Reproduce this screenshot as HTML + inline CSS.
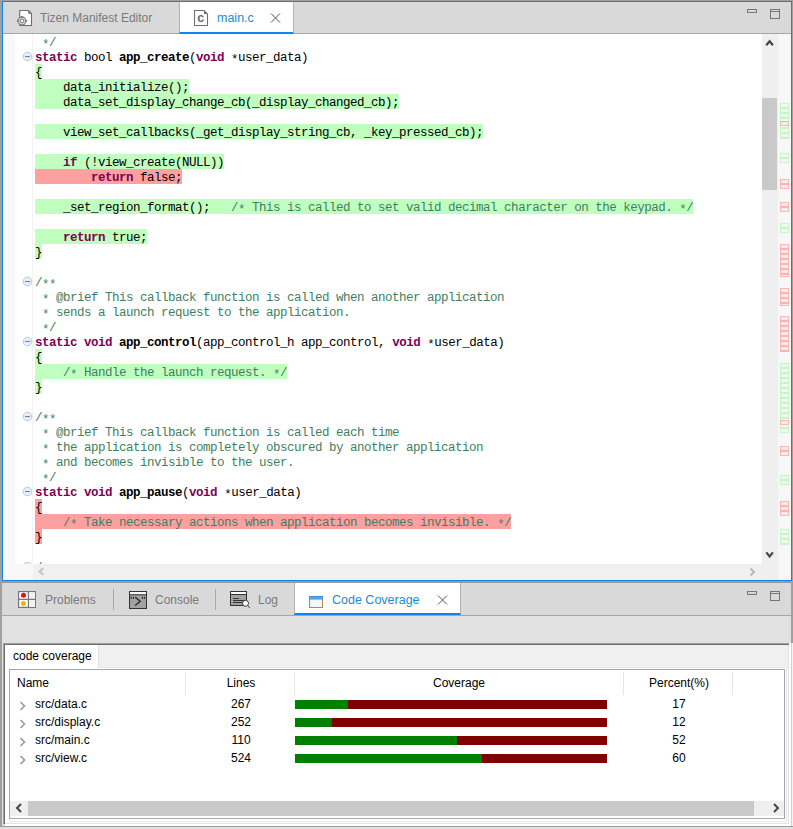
<!DOCTYPE html>
<html><head><meta charset="utf-8">
<style>
*{margin:0;padding:0;box-sizing:border-box}
html,body{width:793px;height:829px;overflow:hidden;background:#a0a0a0;font-family:"Liberation Sans",sans-serif;font-size:12px}
.a{position:absolute}
#edb{left:2px;top:1px;width:790px;height:580px;border:1px solid #0d86f0;background:#fff}
#tabbar{left:3px;top:2px;width:788px;height:32px;background:#d9d9d9;border-bottom:1px solid #a6a6a6}
#gut1{left:3px;top:34px;width:12px;height:530px;background:#f8f8f8}
#gutline{left:32px;top:34px;width:1px;height:530px;background:#f3f3f3}
#code{left:35px;top:34px;width:727px;height:530px;overflow:hidden;font-family:"Liberation Mono",monospace;font-size:12.5px;letter-spacing:-0.5px;line-height:15px;color:#000}
#hsb{left:3px;top:564px;width:30px;height:16px;background:#f8f8f8}
#hsb2{left:33px;top:564px;width:745px;height:16px;background:#f0f0f0}
#vsb{left:762px;top:34px;width:16px;height:546px;background:#efefef}
#vthumb{left:762px;top:98px;width:15px;height:92px;background:#c9c9c9}
#ovr{left:778px;top:34px;width:13px;height:546px;background:#f7f7f7}
.l{height:15px;position:relative;white-space:pre}
.l>span{display:inline-block;height:15px;vertical-align:top;padding-top:2px}
.g{background:#c0ffc0}
.r{background:#ffa0a0}
.k{color:#7f0055;font-weight:bold}
.b{font-weight:bold}
.c{color:#3f7f5f}
.s{font-style:normal;position:relative;top:2px}
</style></head><body>
<div id="edb" class="a"></div>
<div id="tabbar" class="a"></div>
<div id="gut1" class="a"></div>
<div id="gutline" class="a"></div>
<div id="code" class="a">
<div class="l"><span class="c"> <i class="s">*</i>/</span></div>
<div class="l"><span class="k">static</span><span> bool </span><span class="b">app_create</span><span>(</span><span class="k">void</span><span> <i class="s">*</i>user_data)</span></div>
<div class="l"><span class="g">{</span></div>
<div class="l"><span class="g">    data_initialize();</span></div>
<div class="l"><span class="g">    data_set_display_change_cb(_display_changed_cb);</span></div>
<div class="l"></div>
<div class="l"><span class="g">    view_set_callbacks(_get_display_string_cb, _key_pressed_cb);</span></div>
<div class="l"></div>
<div class="l"><span class="g">    <span class="k">if</span> (!view_create(NULL))</span></div>
<div class="l"><span class="r">        <span class="k">return</span> false;</span></div>
<div class="l"></div>
<div class="l"><span class="g">    _set_region_format();   <span class="c">/<i class="s">*</i> This is called to set valid decimal character on the keypad. <i class="s">*</i>/</span></span></div>
<div class="l"></div>
<div class="l"><span class="g">    <span class="k">return</span> true;</span></div>
<div class="l"><span class="g">}</span></div>
<div class="l"></div>
<div class="l"><span class="c">/<i class="s">*</i><i class="s">*</i></span></div>
<div class="l"><span class="c"> <i class="s">*</i> @brief This callback function is called when another application</span></div>
<div class="l"><span class="c"> <i class="s">*</i> sends a launch request to the application.</span></div>
<div class="l"><span class="c"> <i class="s">*</i>/</span></div>
<div class="l"><span class="k">static</span><span> </span><span class="k">void</span><span> </span><span class="b">app_control</span><span>(app_control_h app_control, </span><span class="k">void</span><span> <i class="s">*</i>user_data)</span></div>
<div class="l"><span class="g">{</span></div>
<div class="l"><span class="g">    <span class="c">/<i class="s">*</i> Handle the launch request. <i class="s">*</i>/</span></span></div>
<div class="l"><span class="g">}</span></div>
<div class="l"></div>
<div class="l"><span class="c">/<i class="s">*</i><i class="s">*</i></span></div>
<div class="l"><span class="c"> <i class="s">*</i> @brief This callback function is called each time</span></div>
<div class="l"><span class="c"> <i class="s">*</i> the application is completely obscured by another application</span></div>
<div class="l"><span class="c"> <i class="s">*</i> and becomes invisible to the user.</span></div>
<div class="l"><span class="c"> <i class="s">*</i>/</span></div>
<div class="l"><span class="k">static</span><span> </span><span class="k">void</span><span> </span><span class="b">app_pause</span><span>(</span><span class="k">void</span><span> <i class="s">*</i>user_data)</span></div>
<div class="l"><span class="r">{</span></div>
<div class="l"><span class="r">    <span class="c">/<i class="s">*</i> Take necessary actions when application becomes invisible. <i class="s">*</i>/</span></span></div>
<div class="l"><span class="r">}</span></div>
<div class="l"></div>
<div class="l"><span class="c">/</span></div>
  </div>
<div id="hsb" class="a"></div>
<div id="hsb2" class="a"></div>
<div id="vsb" class="a"></div>
<div id="vthumb" class="a"></div>
<div id="ovr" class="a"></div>
<div class="a" style="left:40px;top:11px;font-size:12px;color:#7a7a7a;line-height:15px">Tizen Manifest Editor</div>
<svg class="a" style="left:16px;top:9px" width="18" height="19" viewBox="0 0 18 19">
<path d="M3.7 16.5 V1.5 H12.5 L15.5 4.5 V16.5 Z" fill="#fff" stroke="#6e6e6e" stroke-width="1.1"/>
<path d="M12.3 1.5 V4.7 H15.5 Z" fill="#6e6e6e"/>
<circle cx="6" cy="12" r="3.9" fill="#dedede" stroke="#7c7c7c" stroke-width="1.1"/>
<rect x="5" y="7" width="2" height="1.4" fill="#7c7c7c"/>
<rect x="0.9" y="11" width="1.4" height="2" fill="#7c7c7c"/>
<rect x="9.7" y="11" width="1.4" height="2" fill="#7c7c7c"/>
<circle cx="6" cy="12" r="1.9" fill="none" stroke="#7c7c7c" stroke-width="1"/>
<circle cx="6" cy="12" r="1" fill="#fff"/>
<path d="M3.7 16.5 H15.5" stroke="#6e6e6e" stroke-width="1.1"/>
</svg>
<div class="a" style="left:179px;top:2px;width:115px;height:32px;background:#fff;border-left:1px solid #b4b4b4;border-right:1px solid #b4b4b4;border-bottom:2px solid #0d86f0"></div>
<svg class="a" style="left:193px;top:9px" width="16" height="18" viewBox="0 0 16 18">
<path d="M1.5 16.5 V1.5 H11 L14.5 5 V16.5 Z" fill="#fff" stroke="#707070" stroke-width="1.1"/>
<path d="M11 1.5 V5 H14.5 Z" fill="#707070"/>
<text x="7.8" y="12.6" font-family="Liberation Sans" font-weight="bold" font-size="12.5" fill="#6a6a6a" text-anchor="middle">c</text>
</svg>
<div class="a" style="left:217px;top:11px;font-size:12.5px;color:#1a8cd8;line-height:15px">main.c</div>
<svg class="a" style="left:270px;top:13px" width="11" height="10" viewBox="0 0 11 10">
<path d="M1 0.5 L10 9.5 M10 0.5 L1 9.5" stroke="#555" stroke-width="1"/>
</svg>
<div class="a" style="left:747px;top:9px;width:10px;height:4px;border:1px solid #777"></div>
<div class="a" style="left:770px;top:9px;width:10px;height:10px;border:1px solid #777"></div><div class="a" style="left:771px;top:11px;width:8px;height:1px;background:#777"></div>
<svg class="a" style="left:22px;top:51px" width="11" height="11" viewBox="0 0 11 11"><circle cx="5.5" cy="5.5" r="4.3" fill="#e8f0fb" stroke="#bcc7d9" stroke-width="1"/><path d="M3 5.5 H8" stroke="#7482a2" stroke-width="1.1"/></svg>
<svg class="a" style="left:22px;top:276px" width="11" height="11" viewBox="0 0 11 11"><circle cx="5.5" cy="5.5" r="4.3" fill="#e8f0fb" stroke="#bcc7d9" stroke-width="1"/><path d="M3 5.5 H8" stroke="#7482a2" stroke-width="1.1"/></svg>
<svg class="a" style="left:22px;top:336px" width="11" height="11" viewBox="0 0 11 11"><circle cx="5.5" cy="5.5" r="4.3" fill="#e8f0fb" stroke="#bcc7d9" stroke-width="1"/><path d="M3 5.5 H8" stroke="#7482a2" stroke-width="1.1"/></svg>
<svg class="a" style="left:22px;top:411px" width="11" height="11" viewBox="0 0 11 11"><circle cx="5.5" cy="5.5" r="4.3" fill="#e8f0fb" stroke="#bcc7d9" stroke-width="1"/><path d="M3 5.5 H8" stroke="#7482a2" stroke-width="1.1"/></svg>
<svg class="a" style="left:22px;top:486px" width="11" height="11" viewBox="0 0 11 11"><circle cx="5.5" cy="5.5" r="4.3" fill="#e8f0fb" stroke="#bcc7d9" stroke-width="1"/><path d="M3 5.5 H8" stroke="#7482a2" stroke-width="1.1"/></svg>
<div class="a" style="left:22px;top:562px;width:11px;height:2px;overflow:hidden"><svg style="position:absolute;left:0;top:-1px" width="11" height="11" viewBox="0 0 11 11"><circle cx="5.5" cy="5.5" r="4.3" fill="#e8f0fb" stroke="#bcc7d9" stroke-width="1"/><path d="M3 5.5 H8" stroke="#7482a2" stroke-width="1.1"/></svg></div>
<svg class="a" style="left:765px;top:39px" width="10" height="8" viewBox="0 0 10 8"><path d="M1.3 6.3 L4.6 2.3 L7.9 6.3" fill="none" stroke="#454545" stroke-width="2.2"/></svg>
<svg class="a" style="left:765px;top:551px" width="10" height="8" viewBox="0 0 10 8"><path d="M1.3 1.4 L4.6 5.4 L7.9 1.4" fill="none" stroke="#454545" stroke-width="2.2"/></svg>
<svg class="a" style="left:748px;top:567px" width="10" height="10" viewBox="0 0 10 10"><path d="M2.5 1.5 L6 5 L2.5 8.5" fill="none" stroke="#b8b8b8" stroke-width="2"/></svg>
<div class="a" style="left:780px;top:103px;width:9px;height:36px;border:1px solid #c6f5c6;background:repeating-linear-gradient(to bottom,#f0fdf0 0px,#f0fdf0 3px,#c6f5c6 3px,#c6f5c6 5px)"></div>
<div class="a" style="left:780px;top:121px;width:9px;height:5px;border:1px solid #ffb4b4;background:repeating-linear-gradient(to bottom,#ffeaea 0px,#ffeaea 3px,#ffb4b4 3px,#ffb4b4 5px)"></div>
<div class="a" style="left:780px;top:153px;width:9px;height:10px;border:1px solid #c6f5c6;background:repeating-linear-gradient(to bottom,#f0fdf0 0px,#f0fdf0 3px,#c6f5c6 3px,#c6f5c6 5px)"></div>
<div class="a" style="left:780px;top:179px;width:9px;height:10px;border:1px solid #ffb4b4;background:repeating-linear-gradient(to bottom,#ffeaea 0px,#ffeaea 3px,#ffb4b4 3px,#ffb4b4 5px)"></div>
<div class="a" style="left:780px;top:202px;width:9px;height:10px;border:1px solid #ffb4b4;background:repeating-linear-gradient(to bottom,#ffeaea 0px,#ffeaea 3px,#ffb4b4 3px,#ffb4b4 5px)"></div>
<div class="a" style="left:780px;top:223px;width:9px;height:10px;border:1px solid #c6f5c6;background:repeating-linear-gradient(to bottom,#f0fdf0 0px,#f0fdf0 3px,#c6f5c6 3px,#c6f5c6 5px)"></div>
<div class="a" style="left:780px;top:244px;width:9px;height:33px;border:1px solid #ffb4b4;background:repeating-linear-gradient(to bottom,#ffeaea 0px,#ffeaea 3px,#ffb4b4 3px,#ffb4b4 5px)"></div>
<div class="a" style="left:780px;top:288px;width:9px;height:18px;border:1px solid #ffb4b4;background:repeating-linear-gradient(to bottom,#ffeaea 0px,#ffeaea 3px,#ffb4b4 3px,#ffb4b4 5px)"></div>
<div class="a" style="left:780px;top:316px;width:9px;height:36px;border:1px solid #ffb4b4;background:repeating-linear-gradient(to bottom,#ffeaea 0px,#ffeaea 3px,#ffb4b4 3px,#ffb4b4 5px)"></div>
<div class="a" style="left:780px;top:363px;width:9px;height:70px;border:1px solid #c6f5c6;background:repeating-linear-gradient(to bottom,#f0fdf0 0px,#f0fdf0 3px,#c6f5c6 3px,#c6f5c6 5px)"></div>
<div class="a" style="left:780px;top:420px;width:9px;height:5px;border:1px solid #ffb4b4;background:repeating-linear-gradient(to bottom,#ffeaea 0px,#ffeaea 3px,#ffb4b4 3px,#ffb4b4 5px)"></div>
<div class="a" style="left:780px;top:446px;width:9px;height:10px;border:1px solid #ffb4b4;background:repeating-linear-gradient(to bottom,#ffeaea 0px,#ffeaea 3px,#ffb4b4 3px,#ffb4b4 5px)"></div>
<div class="a" style="left:780px;top:475px;width:9px;height:10px;border:1px solid #c6f5c6;background:repeating-linear-gradient(to bottom,#f0fdf0 0px,#f0fdf0 3px,#c6f5c6 3px,#c6f5c6 5px)"></div>
<div class="a" style="left:780px;top:501px;width:9px;height:15px;border:1px solid #ffb4b4;background:repeating-linear-gradient(to bottom,#ffeaea 0px,#ffeaea 3px,#ffb4b4 3px,#ffb4b4 5px)"></div>
<div class="a" style="left:780px;top:529px;width:9px;height:16px;border:1px solid #c6f5c6;background:repeating-linear-gradient(to bottom,#f0fdf0 0px,#f0fdf0 3px,#c6f5c6 3px,#c6f5c6 5px)"></div>
<svg class="a" style="left:37px;top:567px" width="10" height="10" viewBox="0 0 10 10"><path d="M6.3 1.3 L2.6 4.5 L6.3 7.7" fill="none" stroke="#c2c2c2" stroke-width="2"/></svg>
<!--EDITOR_EXTRA-->
<div class="a" style="left:2px;top:581px;width:789px;height:2px;background:#9a9a9a"></div>
<div class="a" style="left:2px;top:583px;width:789px;height:244px;background:#d9d9d9"></div>
<div class="a" style="left:2px;top:615px;width:789px;height:1px;background:#a6a6a6"></div>
<div class="a" style="left:2px;top:616px;width:789px;height:27px;background:#e1e1e1"></div>
<!-- sunken frame -->
<div class="a" style="left:2px;top:643px;width:1px;height:183px;background:#e0e0e0"></div>
<div class="a" style="left:3px;top:643px;width:787px;height:1px;background:#a0a0a0"></div>
<div class="a" style="left:3px;top:644px;width:786px;height:1px;background:#6e6e6e"></div>
<div class="a" style="left:3px;top:643px;width:1px;height:181px;background:#a0a0a0"></div>
<div class="a" style="left:4px;top:644px;width:1px;height:180px;background:#6e6e6e"></div>
<div class="a" style="left:5px;top:645px;width:784px;height:181px;background:#fff"></div>
<div class="a" style="left:9px;top:821px;width:778px;height:1px;background:#e8e8e8"></div>
<div class="a" style="left:786px;top:667px;width:1px;height:155px;background:#e8e8e8"></div>
<div class="a" style="left:5px;top:823px;width:784px;height:1px;background:#e2e2e2"></div>
<div class="a" style="left:788px;top:645px;width:1px;height:179px;background:#e2e2e2"></div>
<div class="a" style="left:789px;top:643px;width:2px;height:183px;background:#fff"></div>
<div class="a" style="left:791px;top:643px;width:1px;height:183px;background:#d0d0d0"></div>
<div class="a" style="left:792px;top:643px;width:1px;height:183px;background:#f4f4f4"></div>
<div class="a" style="left:0px;top:826px;width:793px;height:1px;background:#9c9c9c"></div>
<div class="a" style="left:0px;top:827px;width:793px;height:2px;background:#e1e1e1"></div>
<!-- sub tab strip -->
<div class="a" style="left:98px;top:645px;width:690px;height:23px;background:#f0f0f0;border-left:1px solid #e0e0e0;border-bottom:1px solid #e6e6e6"></div>
<div class="a" style="left:13px;top:647px;font-size:12px;line-height:18px;color:#000">code coverage</div>
<!-- table -->
<div class="a" style="left:9px;top:669px;width:776px;height:150px;border:1px solid #a5a5ad;background:#fff"></div>
<div class="a" style="left:185px;top:672px;width:1px;height:23px;background:#e6e6e6"></div>
<div class="a" style="left:294px;top:672px;width:1px;height:23px;background:#e6e6e6"></div>
<div class="a" style="left:623px;top:672px;width:1px;height:23px;background:#e6e6e6"></div>
<div class="a" style="left:732px;top:672px;width:1px;height:23px;background:#e6e6e6"></div>
<div class="a" style="left:17px;top:674px;font-size:12px;line-height:18px">Name</div>
<div class="a" style="left:187px;top:674px;width:108px;text-align:center;font-size:12px;line-height:18px">Lines</div>
<div class="a" style="left:295px;top:674px;width:328px;text-align:center;font-size:12px;line-height:18px">Coverage</div>
<div class="a" style="left:625px;top:674px;width:108px;text-align:center;font-size:12px;line-height:18px">Percent(%)</div>
<svg class="a" style="left:19px;top:701px" width="8" height="10" viewBox="0 0 8 10"><path d="M1.5 1 L5.5 5 L1.5 9" fill="none" stroke="#9a9a9a" stroke-width="1.6"/></svg>
<div class="a" style="left:35px;top:695px;font-size:12px;line-height:18px">src/data.c</div>
<div class="a" style="left:187px;top:695px;width:108px;text-align:center;font-size:12px;line-height:18px">267</div>
<div class="a" style="left:295px;top:700px;width:312px;height:9px;background:#800000"></div>
<div class="a" style="left:295px;top:700px;width:53px;height:9px;background:#008000"></div>
<div class="a" style="left:625px;top:695px;width:108px;text-align:center;font-size:12px;line-height:18px">17</div>
<svg class="a" style="left:19px;top:719px" width="8" height="10" viewBox="0 0 8 10"><path d="M1.5 1 L5.5 5 L1.5 9" fill="none" stroke="#9a9a9a" stroke-width="1.6"/></svg>
<div class="a" style="left:35px;top:713px;font-size:12px;line-height:18px">src/display.c</div>
<div class="a" style="left:187px;top:713px;width:108px;text-align:center;font-size:12px;line-height:18px">252</div>
<div class="a" style="left:295px;top:718px;width:312px;height:9px;background:#800000"></div>
<div class="a" style="left:295px;top:718px;width:37px;height:9px;background:#008000"></div>
<div class="a" style="left:625px;top:713px;width:108px;text-align:center;font-size:12px;line-height:18px">12</div>
<svg class="a" style="left:19px;top:737px" width="8" height="10" viewBox="0 0 8 10"><path d="M1.5 1 L5.5 5 L1.5 9" fill="none" stroke="#9a9a9a" stroke-width="1.6"/></svg>
<div class="a" style="left:35px;top:731px;font-size:12px;line-height:18px">src/main.c</div>
<div class="a" style="left:187px;top:731px;width:108px;text-align:center;font-size:12px;line-height:18px">110</div>
<div class="a" style="left:295px;top:736px;width:312px;height:9px;background:#800000"></div>
<div class="a" style="left:295px;top:736px;width:162px;height:9px;background:#008000"></div>
<div class="a" style="left:625px;top:731px;width:108px;text-align:center;font-size:12px;line-height:18px">52</div>
<svg class="a" style="left:19px;top:755px" width="8" height="10" viewBox="0 0 8 10"><path d="M1.5 1 L5.5 5 L1.5 9" fill="none" stroke="#9a9a9a" stroke-width="1.6"/></svg>
<div class="a" style="left:35px;top:749px;font-size:12px;line-height:18px">src/view.c</div>
<div class="a" style="left:187px;top:749px;width:108px;text-align:center;font-size:12px;line-height:18px">524</div>
<div class="a" style="left:295px;top:754px;width:312px;height:9px;background:#800000"></div>
<div class="a" style="left:295px;top:754px;width:187px;height:9px;background:#008000"></div>
<div class="a" style="left:625px;top:749px;width:108px;text-align:center;font-size:12px;line-height:18px">60</div>
<div class="a" style="left:10px;top:801px;width:774px;height:15px;background:#efefef"></div>
<div class="a" style="left:28px;top:801px;width:726px;height:15px;background:#c9c9c9"></div>
<svg class="a" style="left:14px;top:803px" width="10" height="10" viewBox="0 0 10 10"><path d="M7 1 L3 5 L7 9" fill="none" stroke="#454545" stroke-width="2"/></svg>
<svg class="a" style="left:771px;top:803px" width="10" height="10" viewBox="0 0 10 10"><path d="M3 1 L7 5 L3 9" fill="none" stroke="#454545" stroke-width="2"/></svg>
<!-- bottom tabs -->
<svg class="a" style="left:18px;top:591px" width="18" height="17" viewBox="0 0 18 17">
<rect x="0.6" y="0.6" width="16.8" height="15.8" fill="#fff" stroke="#777" stroke-width="1.2"/>
<rect x="11" y="1.2" width="6" height="6.8" fill="#f2f2f2"/><rect x="11" y="9" width="6" height="7" fill="#f2f2f2"/>
<path d="M10.4 0.6 V16.4 M0.6 8.3 H17.4" stroke="#777" stroke-width="1.2"/>
<circle cx="5.5" cy="4.3" r="2.5" fill="#e81010"/>
<circle cx="5.5" cy="12.4" r="2.5" fill="#f2b600"/>
</svg>
<div class="a" style="left:45px;top:593px;font-size:12px;line-height:15px;color:#7a7a7a">Problems</div>
<div class="a" style="left:113px;top:589px;width:1px;height:21px;background:#a8a8a8"></div>
<svg class="a" style="left:129px;top:591px" width="18" height="18" viewBox="0 0 18 18">
<rect x="0.5" y="0.5" width="17" height="17" fill="#a2a2a2" stroke="#333" stroke-width="1"/>
<rect x="1" y="1" width="16" height="2.5" fill="#fff"/>
<path d="M0.5 3.8 H17.5" stroke="#333" stroke-width="1"/>
<rect x="1.6" y="5.8" width="1.1" height="2" fill="#222"/><rect x="3.9" y="5.8" width="1.1" height="2" fill="#222"/><rect x="12.9" y="5.8" width="1.1" height="2" fill="#222"/><rect x="14.9" y="5.8" width="1.1" height="2" fill="#222"/>
<path d="M6.2 6.2 L11.3 10.3 L6.2 14.5" fill="none" stroke="#222" stroke-width="1.2"/>
</svg>
<div class="a" style="left:155px;top:593px;font-size:12px;line-height:15px;color:#7a7a7a">Console</div>
<div class="a" style="left:215px;top:589px;width:1px;height:21px;background:#a8a8a8"></div>
<svg class="a" style="left:230px;top:591px" width="21" height="18" viewBox="0 0 21 18">
<rect x="0.5" y="0.5" width="16" height="14" fill="#a2a2a2" stroke="#333" stroke-width="1"/>
<rect x="1" y="1" width="15" height="2.2" fill="#fff"/>
<path d="M0.5 3.5 H16.5" stroke="#333" stroke-width="1"/>
<rect x="3" y="7" width="6" height="1" fill="#333"/><rect x="3" y="9" width="11" height="1" fill="#333"/><rect x="3" y="11" width="9" height="1" fill="#333"/>
<path d="M17.5 14.5 L19.8 16.8" stroke="#333" stroke-width="1"/>
<circle cx="15.5" cy="12.3" r="3" fill="#fff" stroke="#333" stroke-width="1"/>
</svg>
<div class="a" style="left:258px;top:593px;font-size:12px;line-height:15px;color:#7a7a7a">Log</div>
<div class="a" style="left:294px;top:583px;width:167px;height:32px;background:#fff;border-left:1px solid #b4b4b4;border-right:1px solid #b4b4b4;border-bottom:2px solid #0d86f0"></div>
<svg class="a" style="left:309px;top:596px" width="14" height="12" viewBox="0 0 14 12">
<rect x="0.5" y="0.5" width="13" height="11" fill="#f0f8ff" stroke="#a88a50" stroke-width="1"/>
<rect x="0" y="0" width="14" height="3.5" fill="#3f8fd0"/>
<rect x="0.5" y="1" width="13" height="1.5" fill="#5ab0e8"/>
</svg>
<div class="a" style="left:332px;top:593px;font-size:12.5px;line-height:15px;color:#1a8cd8">Code Coverage</div>
<svg class="a" style="left:437px;top:595px" width="11" height="10" viewBox="0 0 11 10">
<path d="M1 0.5 L10 9.5 M10 0.5 L1 9.5" stroke="#555" stroke-width="1"/>
</svg>
<div class="a" style="left:747px;top:591px;width:10px;height:4px;border:1px solid #777"></div>
<div class="a" style="left:770px;top:591px;width:10px;height:10px;border:1px solid #777"></div><div class="a" style="left:771px;top:593px;width:8px;height:1px;background:#777"></div>
<!--BOTTOM-->
</body></html>
